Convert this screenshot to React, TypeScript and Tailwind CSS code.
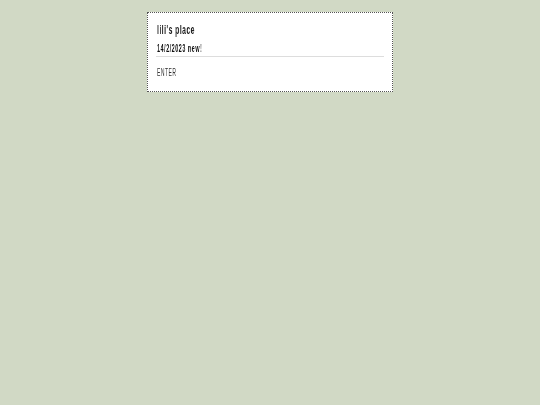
export default function App() {
  return (
    <div className="min-h-[405px] w-full bg-[#d1d9c5] pt-3 font-['Liberation_Sans',Arial,sans-serif]">
      <div className="mx-auto w-[246px] border border-dotted border-[#555] bg-white px-[8px] pt-[10px] pb-[12px]">
        <h1 className="h-[14px] pl-px text-[12px] font-bold leading-[14px] text-[#222]">
          <span className="inline-block origin-left scale-x-[0.57] whitespace-nowrap tracking-[0.8px] will-change-transform">
            lili's place
          </span>
        </h1>
        <div className="mt-[6px] border-b border-[#ddd] pb-px">
          <p className="pl-px text-[10px] font-bold leading-[12px] text-[#111]">
            <span className="inline-block origin-left scale-x-[0.54] whitespace-nowrap tracking-[1px] will-change-transform">
              14/2/2023 new!
            </span>
          </p>
        </div>
        <p className="mt-[10px] pl-px text-[10px] leading-[12px] text-[#333]">
          <span className="inline-block origin-left scale-x-[0.5] whitespace-nowrap tracking-[1px] will-change-transform">
            ENTER
          </span>
        </p>
      </div>
    </div>
  );
}
